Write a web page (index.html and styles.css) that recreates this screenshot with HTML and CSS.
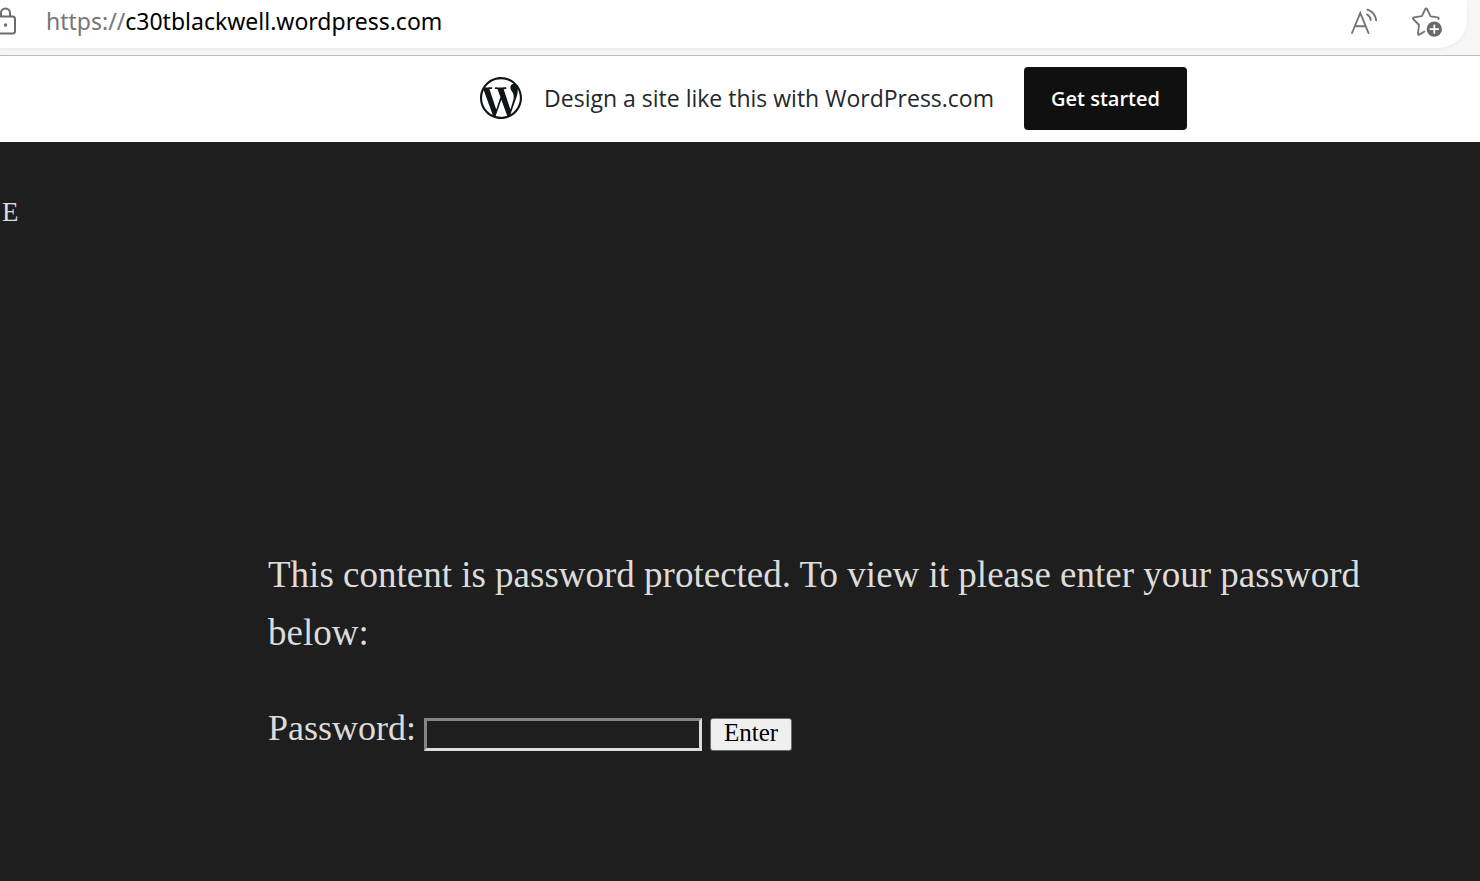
FILE: index.html
```html
<!DOCTYPE html>
<html lang="en">
<head>
<meta charset="utf-8">
<title>c30tblackwell.wordpress.com</title>
<link rel="stylesheet" href="styles.css">
</head>
<body>
<header class="toolbar">
  <div class="address">
    <svg class="lock" viewBox="0 0 17 28" fill="none" stroke="#6b6b6b" stroke-width="2" aria-hidden="true">
      <path d="M-4 9.500H12.500a2.500 2.500 0 0 1 2.500 2.500V24a2.500 2.500 0 0 1-2.500 2.500H-4M1 9.500V6a4.500 4.500 0 0 1 9 0v3.500"/>
      <circle cx="5.500" cy="18" r="1.700" fill="#6b6b6b" stroke="none"/>
    </svg>
    <a class="url" href="#"><span class="scheme">https://</span>c30tblackwell.wordpress.com</a>
    <button class="tool" type="button" aria-label="Read aloud">
      <svg width="30" height="30" viewBox="0 0 30 30" fill="none" stroke="#737373" stroke-width="1.900" stroke-linecap="round" aria-hidden="true">
        <path d="M3 27 11.300 7 19.500 27M6 20.300h10.700M18 8.500c2 1 3.500 3 3.700 5.500M18.500 3.700c4.500 1.600 8 5.500 8.700 10.600"/>
      </svg>
    </button>
    <button class="tool" type="button" aria-label="Add to favorites">
      <svg width="32" height="32" viewBox="0 0 32 32" fill="none" stroke="#737373" stroke-width="1.800" stroke-linecap="round" stroke-linejoin="round" aria-hidden="true">
        <path d="M13.500 26.500 8.200 29.600q-1.300.600-1.200-.900l1-8.700-5.800-6q-.900-1.200.700-1.600l8-1.300L14.300 4q.900-1.300 1.700 0l3.500 7.300 7.300 1q1.500.300.700 1.800"/>
        <circle cx="23.300" cy="24.200" r="7.600" fill="#686868" stroke="none"/>
        <path d="M23.300 20.300v7.800M19.400 24.200h7.800" stroke="#fff"/>
      </svg>
    </button>
  </div>
</header>
<aside class="banner">
  <svg class="logo" viewBox="0 0 24 24" fill="#101517" fill-rule="evenodd" role="img" aria-label="WordPress">
    <path d="M21.469 6.825c.84 1.537 1.318 3.3 1.318 5.175 0 3.979-2.156 7.456-5.363 9.325l3.295-9.527c.615-1.54.82-2.771.82-3.864 0-.405-.026-.78-.07-1.11m-7.981.105c.647-.03 1.232-.105 1.232-.105.582-.075.514-.93-.067-.899 0 0-1.755.135-2.88.135-1.064 0-2.85-.15-2.85-.15-.585-.03-.661.855-.075.885 0 0 .54.061 1.125.09l1.68 4.605-2.37 7.08L5.354 6.9c.649-.03 1.234-.1 1.234-.1.585-.075.516-.93-.065-.896 0 0-1.746.138-2.874.138-.2 0-.438-.008-.69-.015C4.911 3.15 8.235 1.215 12 1.215c2.809 0 5.365 1.072 7.286 2.833-.046-.003-.091-.009-.141-.009-1.06 0-1.812.923-1.812 1.914 0 .89.513 1.643 1.06 2.531.411.72.89 1.643.89 2.977 0 .915-.354 1.994-.821 3.479l-1.075 3.585-3.9-11.61.001.014zM12 22.784c-1.059 0-2.081-.153-3.048-.437l3.237-9.406 3.315 9.087c.024.053.05.101.078.149-1.12.393-2.325.609-3.582.609M1.211 12c0-1.564.336-3.05.935-4.39L7.29 21.709C3.694 19.96 1.212 16.271 1.211 12M12 0C5.385 0 0 5.385 0 12s5.385 12 12 12 12-5.385 12-12S18.615 0 12 0"/>
  </svg>
  <span class="pitch">Design a site like this with WordPress.com</span>
  <a class="start" href="#">Get started</a>
</aside>
<main class="site">
  <a class="site-title" href="#">E</a>
  <form class="gate">
    <p class="notice">This content is password protected. To view it please enter your password below:</p>
    <div class="row">
      <label for="password">Password:</label>
      <input class="field" id="password" type="password">
      <button class="enter" type="button">Enter</button>
    </div>
  </form>
</main>
</body>
</html>
```
FILE: styles.css
```css
* {
  box-sizing: border-box;
}

body {
  margin: 0;
  min-height: 100vh;
  display: flex;
  flex-direction: column;
  background: #1e1e1e;
  font-family: "Open Sans", "Noto Sans", sans-serif;
}

.toolbar {
  height: 56px;
  padding-right: 13px;
  background: #f6f6f6;
  border-bottom: 1px solid #bdbdbd;
}

.address {
  height: 48px;
  padding: 0 24px 6px 0;
  display: flex;
  align-items: center;
  background: #fff;
  border-radius: 0 0 28px 0;
  box-shadow: 0 1px 3px #e8e8e8;
}

.lock {
  width: 17px;
  height: 28px;
  margin-right: 29px;
}

.url {
  margin-right: auto;
  color: #000;
  font-family: "Noto Sans", sans-serif;
  font-size: 23px;
  line-height: 36px;
  text-decoration: none;
}

.scheme {
  color: #767676;
}

.tool {
  display: flex;
  margin-left: 32px;
  padding: 0;
  border: 0;
  background: none;
}

.banner {
  height: 86px;
  padding: 0 0 2px 187px;
  display: flex;
  align-items: center;
  justify-content: center;
  background: #fff;
}

.logo {
  width: 42px;
  height: 42px;
  margin-right: 22px;
}

.pitch {
  margin-right: 30px;
  color: #23282d;
  font-size: 23px;
  line-height: 36px;
}

.start {
  padding: 16px 27px;
  border-radius: 4px;
  background: #101010;
  color: #fff;
  font-size: 20px;
  font-weight: 600;
  line-height: 31px;
  text-decoration: none;
}

.site {
  flex: 1;
  color: #dcdcdc;
  font-family: "Liberation Serif", serif;
}

.site-title {
  display: block;
  padding: 54px 0 0 2px;
  color: #dcdcdc;
  font-size: 27px;
  line-height: 32px;
  text-decoration: none;
}

.gate {
  padding: 318px 112px 0 268px;
  font-size: 36px;
  line-height: 58px;
}

.notice {
  margin: 0 0 37px;
  font-size: 37px;
}

.row {
  display: flex;
  align-items: center;
  gap: 8px;
}

.field {
  width: 278px;
  height: 33px;
  margin-top: 12px;
  border: 3px solid;
  border-color: #858585 #dcdcdc #dcdcdc #858585;
  background: transparent;
  color: #dcdcdc;
  font-size: 20px;
}

.enter {
  height: 33px;
  margin-top: 12px;
  padding: 0 13px 3px;
  border: 1px solid #6b6b6b;
  border-radius: 3px;
  background: #efefef;
  color: #000;
  font-family: "Liberation Serif", serif;
  font-size: 25px;
  line-height: 28px;
}
```
